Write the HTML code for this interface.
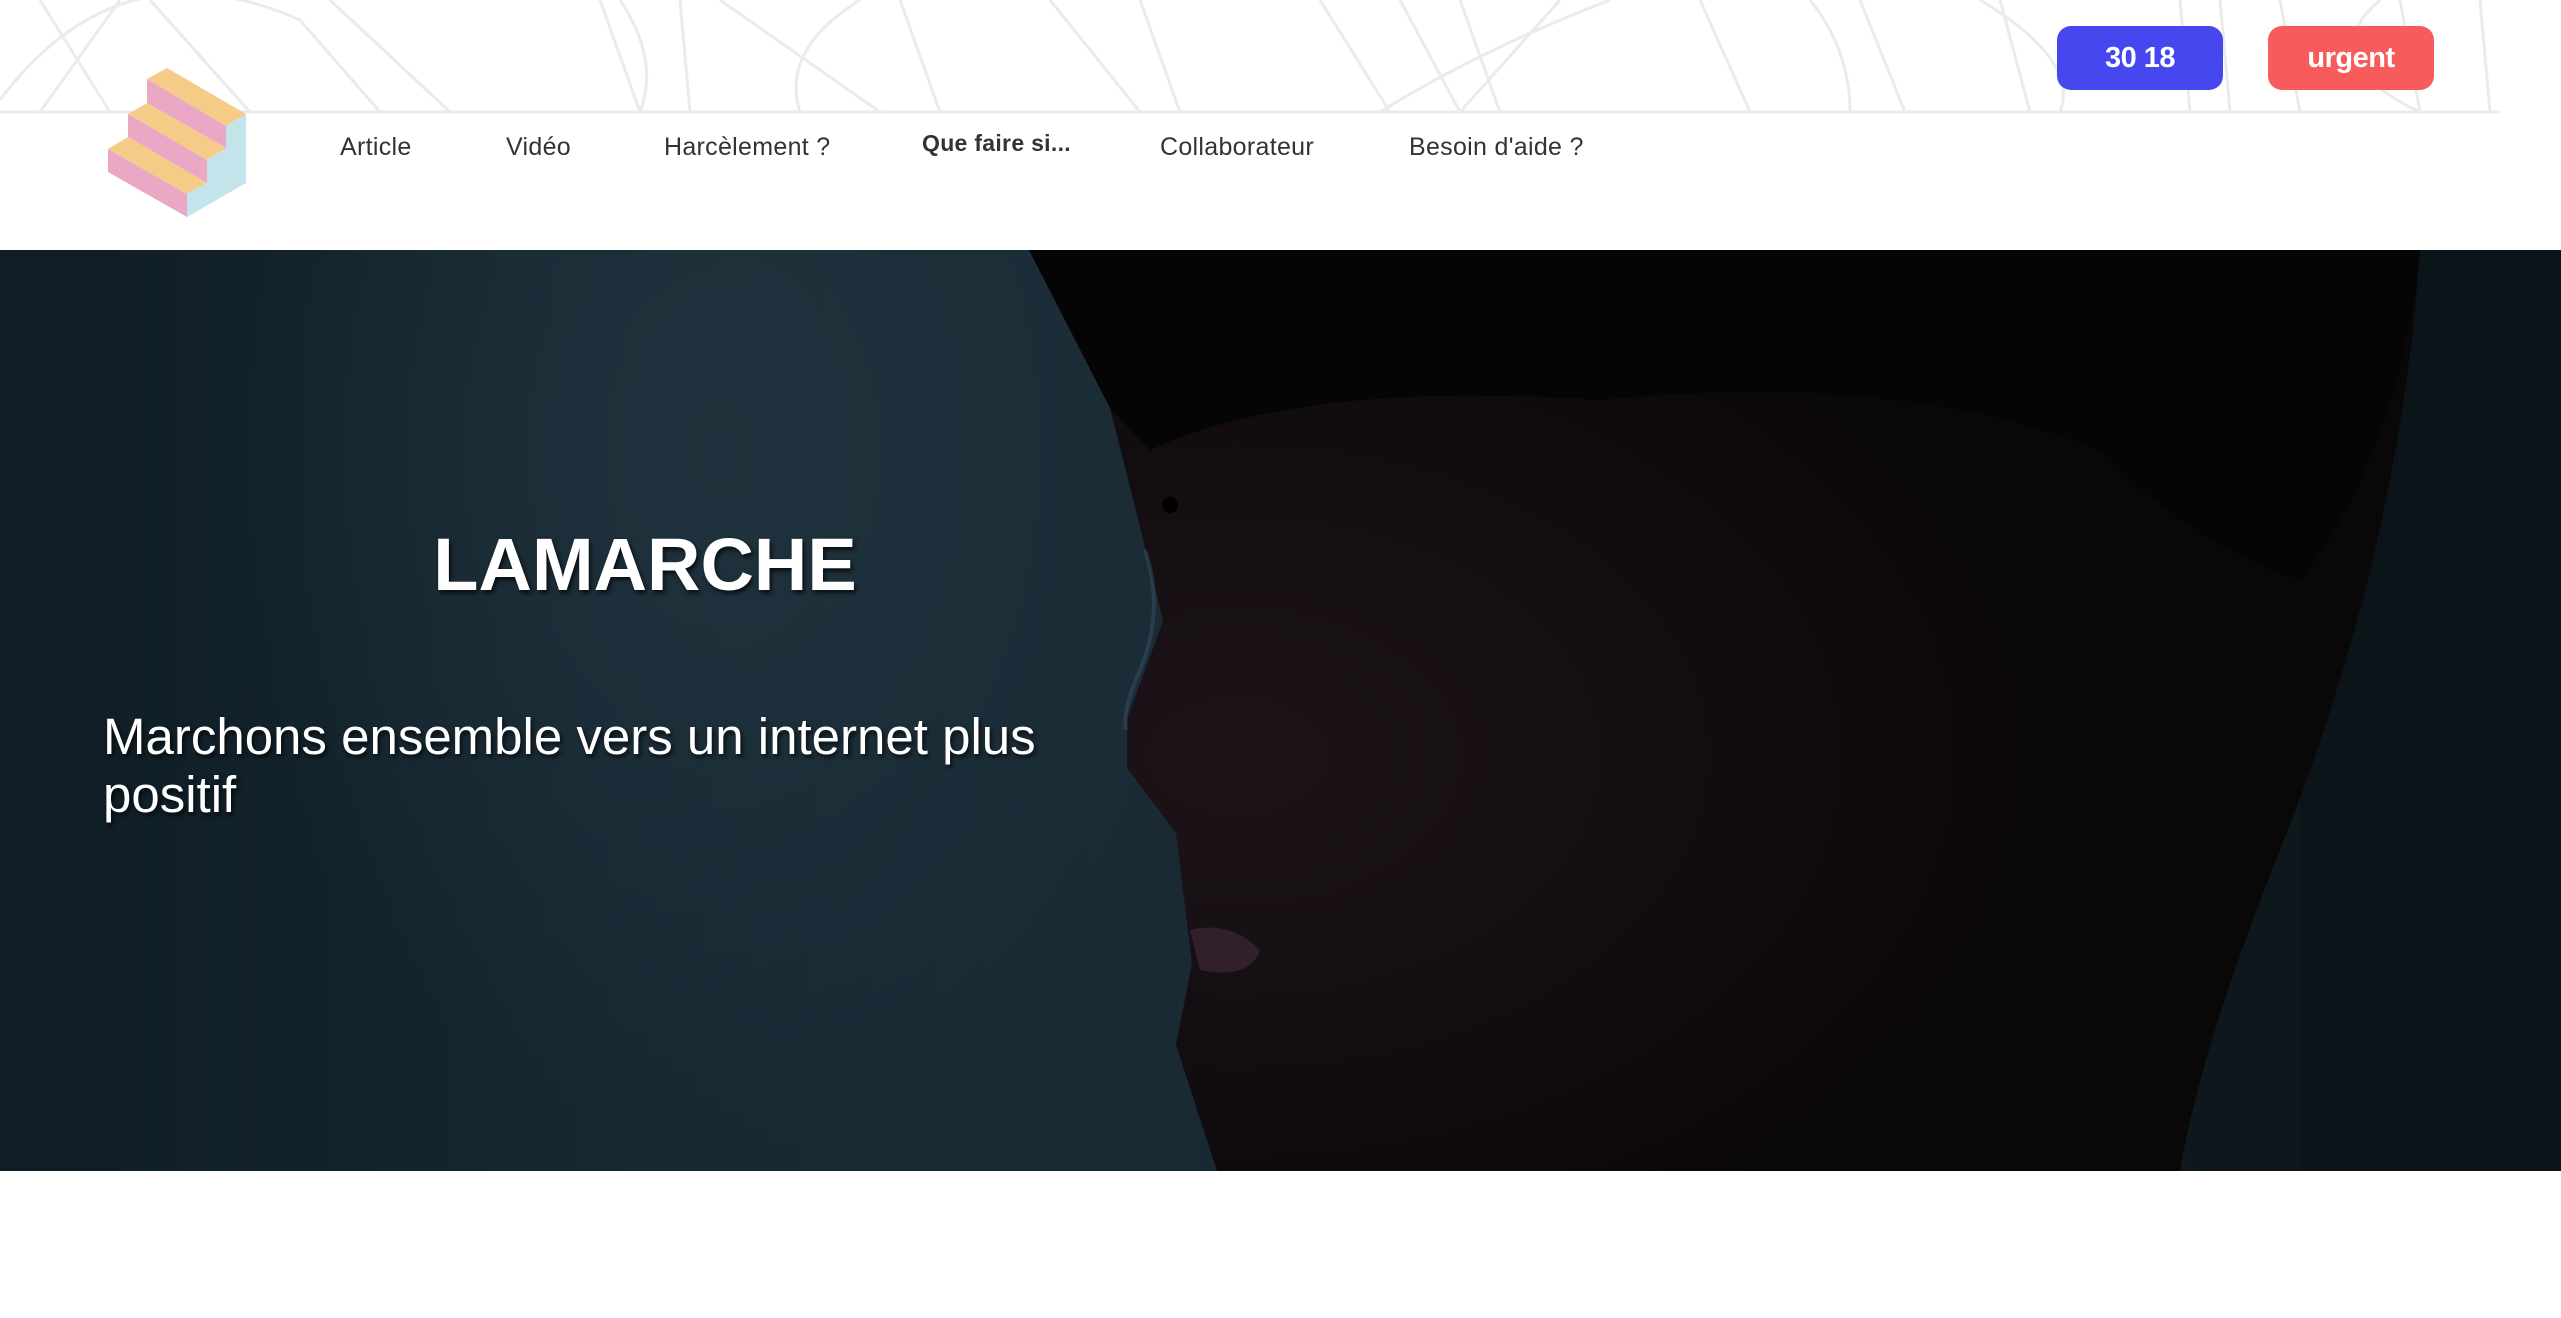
<!DOCTYPE html>
<html><head><meta charset="utf-8"><style>
*{margin:0;padding:0;box-sizing:border-box}
body{width:2561px;height:1318px;background:#fff;position:relative;overflow:hidden;font-family:"Liberation Sans",sans-serif}
.nav{position:absolute;top:133px;font-size:25px;color:#333;letter-spacing:0.3px}
.btn{position:absolute;top:26px;height:64px;border-radius:14px;color:#fff;font-weight:bold;font-size:29px;display:flex;align-items:center;justify-content:center;letter-spacing:-0.5px}
.hero{position:absolute;left:0;top:250px;width:2561px;height:921px;overflow:hidden;
background:radial-gradient(ellipse 500px 700px at 720px 200px,#20323d 0%,rgba(32,50,61,0) 100%),linear-gradient(90deg,#0f1d25 0%,#172a34 30%,#1a2b35 45%,#101c23 60%,#0c1519 100%)}
.t1{position:absolute;left:0;width:1290px;top:272px;text-align:center;color:#fff;font-weight:bold;font-size:74px;letter-spacing:0px;text-shadow:2px 3px 4px rgba(0,0,0,.7)}
.t2{position:absolute;left:103px;top:458px;width:1010px;color:#fff;font-size:51px;line-height:58px;text-shadow:2px 3px 4px rgba(0,0,0,.7)}
</style></head><body>
<svg style="position:absolute;left:0;top:0" width="2561" height="115" fill="none" stroke="#ebebeb" stroke-width="3">
<path d="M0 112H2500"/>
<path d="M0 100Q120 -60 300 20L380 112M40 0L110 112M150 0L250 112M120 0L40 112M330 0L450 112"/>
<path d="M600 0L640 112M620 0Q660 60 640 112M680 0L690 112M720 0L880 112M860 0Q780 50 800 112M900 0L940 112"/>
<path d="M1050 0L1140 112M1140 0L1180 112M1320 0L1390 112M1400 0L1460 112M1460 0L1500 112M1610 0Q1480 50 1380 112M1560 0L1460 112"/>
<path d="M1700 0L1750 112M1810 0Q1850 50 1850 112M1860 0L1905 112M1980 0Q2080 60 2060 112M2000 0L2030 112"/>
<path d="M2180 0L2190 112M2220 0L2230 112M2280 0L2300 112M2380 0Q2310 60 2420 112M2400 0L2420 112M2480 0L2490 112"/>
</svg>
<svg style="position:absolute;left:0;top:0" width="260" height="230">
<polygon points="147,79 167,68 246,114 226,126" fill="#f5cc87"/>
<polygon points="147,79 147,103 226,148 226,126" fill="#eba8c5"/>
<polygon points="128,114 147,103 226,148 207,160" fill="#f5cc87"/>
<polygon points="128,114 128,137 207,183 207,160" fill="#eba8c5"/>
<polygon points="108,149 128,137 207,183 187,194" fill="#f5cc87"/>
<polygon points="108,149 108,172 187,217 187,194" fill="#eba8c5"/>
<polygon points="187,194 187,217 246,183 246,114 226,126 226,148 207,160 207,183" fill="#c4e4ec"/>
</svg>
<div class="nav" style="left:340px">Article</div>
<div class="nav" style="left:506px">Vidéo</div>
<div class="nav" style="left:664px">Harcèlement ?</div>
<div class="nav" style="left:922px;top:130px;font-weight:bold;font-size:23px">Que faire si...</div>
<div class="nav" style="left:1160px">Collaborateur</div>
<div class="nav" style="left:1409px">Besoin d'aide ?</div>
<div class="btn" style="left:2057px;width:166px;background:#4747f0">30 18</div>
<div class="btn" style="left:2268px;width:166px;background:#f85b5b">urgent</div>
<div class="hero">
<svg style="position:absolute;left:0;top:0" width="2561" height="921">
<defs>
<radialGradient id="sk" cx="0.15" cy="0.55" r="0.6"><stop offset="0" stop-color="#1d1419"/><stop offset="1" stop-color="#0a0709"/></radialGradient>
</defs>
<rect x="2300" y="0" width="261" height="921" fill="#0b1418"/>
<path d="M1029 0H2420Q2400 300 2280 600Q2200 800 2180 921H1217L1176 795L1192 713L1184 648L1176 583L1127 518L1127 469L1163 371L1143 289L1110 158Z" fill="url(#sk)"/>
<path d="M1029 0H2420Q2400 200 2300 330Q2200 300 2100 200Q1900 120 1600 150Q1300 130 1150 200L1110 158Z" fill="#050506"/>
<ellipse cx="1170" cy="255" rx="8" ry="8" fill="#000"/>
<path d="M1190 680Q1230 670 1260 700Q1250 730 1200 720Z" fill="#3d2835" opacity=".7"/>
<path d="M1145 300Q1165 360 1140 420Q1122 460 1126 480" stroke="#3a4e63" stroke-width="4" fill="none" opacity=".5"/>
</svg>
<div class="t1">LAMARCHE</div>
<div class="t2">Marchons ensemble vers un internet plus positif</div>
</div>
</body></html>
